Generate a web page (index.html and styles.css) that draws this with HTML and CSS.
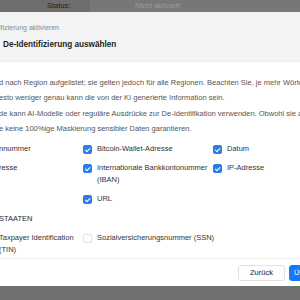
FILE: index.html
```html
<!DOCTYPE html>
<html lang="de">
<head>
<meta charset="utf-8">
<link rel="stylesheet" href="styles.css">
</head>
<body>
<div class="page">
  <div class="table-head">
    <div class="cell cell-status">Status:</div>
    <div class="cell cell-value">Nicht aktiviert</div>
  </div>
  <div class="modal">
    <div class="modal-header">
      <div class="crumb">ifizierung aktivieren</div>
      <div class="title">De-Identifizierung auswählen</div>
    </div>
    <div class="modal-body">
      <p class="desc">d nach Region aufgelistet; sie gelten jedoch für alle Regionen. Beachten Sie, je mehr Wörter Sie auswählen,<br>esto weniger genau kann die von der KI generierte Information sein.<br>de kann AI-Modelle oder reguläre Ausdrücke zur De-Identifikation verwenden. Obwohl sie auf Genauigkeit ausgelegt ist,<br>e keine 100%ige Maskierung sensibler Daten garantieren.</p>
      <div class="grid">
        <div class="item item-cut"><span class="label">nnummer</span></div>
        <label class="item"><span class="box checked"></span><span class="label">Bitcoin-Wallet-Adresse</span></label>
        <label class="item"><span class="box checked"></span><span class="label">Datum</span></label>

        <div class="item item-cut"><span class="label">resse</span></div>
        <label class="item"><span class="box checked"></span><span class="label">Internationale Bankkontonummer<br>(IBAN)</span></label>
        <label class="item"><span class="box checked"></span><span class="label">IP-Adresse</span></label>

        <div class="item item-cut"></div>
        <label class="item"><span class="box checked"></span><span class="label">URL</span></label>
        <div class="item"></div>
      </div>
      <div class="region">STAATEN</div>
      <div class="grid">
        <div class="item item-cut"><span class="label">Taxpayer Identification<br>(TIN)</span></div>
        <label class="item"><span class="box"></span><span class="label">Sozialversicherungsnummer (SSN)</span></label>
        <div class="item"></div>
      </div>
    </div>
    <div class="modal-footer">
      <button class="btn btn-default">Zurück</button>
      <button class="btn btn-primary">Übernehmen</button>
    </div>
  </div>
</div>
</body>
</html>
```
FILE: styles.css
```css
* { box-sizing: border-box; }
html, body { margin: 0; padding: 0; }
body {
  width: 300px;
  height: 300px;
  overflow: hidden;
  background: #707070;
  font-family: "Liberation Sans", Arial, sans-serif;
  font-size: 7.5px;
  color: #333;
}
.page { display: flex; flex-direction: column; width: 300px; }
.table-head {
  display: flex;
  height: 12px;
  line-height: 12px;
  background: #777;
  white-space: nowrap;
}
.cell-status {
  width: 90px;
  padding-left: 47px;
  background: #6e6e6e;
  color: #222;
}
.cell-value {
  padding-left: 45px;
  color: #9c9c9c;
}
.modal {
  flex: none;
  width: 360px;
  height: 274px;
  background: #fff;
  display: flex;
  flex-direction: column;
  white-space: nowrap;
}
.modal-header {
  flex: none;
  height: 50px;
  background: #f3f3f3;
  border-bottom: 1px solid #ebebeb;
  padding-top: 10px;
}
.crumb {
  font-size: 7px;
  line-height: 12px;
  color: #8a8a8a;
  margin-left: -1px;
}
.title {
  margin-top: 5px;
  padding-left: 3px;
  font-size: 8.2px;
  font-weight: bold;
  line-height: 12px;
  color: #1f1f1f;
}
.modal-body {
  flex: 1;
  padding-top: 13px;
}
.desc {
  margin: 0 0 0 -1px;
  line-height: 15.3px;
  color: #555;
}
.grid {
  display: grid;
  grid-template-columns: 83px 130px 130px;
  row-gap: 7px;
  margin-top: 7px;
}
.item {
  display: flex;
  align-items: flex-start;
  line-height: 12px;
  color: #333;
  min-height: 12px;
}
.item-cut { margin-left: -1px; }
.box {
  flex: none;
  width: 9px;
  height: 9px;
  margin-top: 2px;
  margin-right: 5px;
  border: 1px solid #e3e3e3;
  border-radius: 2px;
  background: #fff;
  position: relative;
}
.box.checked {
  background: #2b7de9;
  border-color: #2b7de9;
}
.box.checked::after {
  content: "";
  position: absolute;
  left: 2.2px;
  top: 0.6px;
  width: 2.2px;
  height: 4.4px;
  border: solid #fff;
  border-width: 0 1.3px 1.3px 0;
  transform: rotate(45deg);
}
.region {
  margin-top: 8px;
  margin-left: -1px;
  line-height: 12px;
  color: #2a2a2a;
}
.modal-footer {
  flex: none;
  height: 28px;
  border-top: 1px solid #efefef;
  display: flex;
  align-items: flex-start;
  gap: 4px;
  padding-top: 6px;
  padding-left: 238px;
}
.btn {
  flex: none;
  font-family: inherit;
  font-size: 7.5px;
  height: 16px;
  line-height: 14px;
  padding: 0 12px;
  border-radius: 3px;
  border: 1px solid #e2e2e2;
  background: #fff;
  color: #222;
  margin: 0;
}
.btn-default { width: 47px; padding: 0; }
.btn-primary {
  background: #1677ff;
  border-color: #1677ff;
  color: #fff;
  padding: 0 4px;
}
```
